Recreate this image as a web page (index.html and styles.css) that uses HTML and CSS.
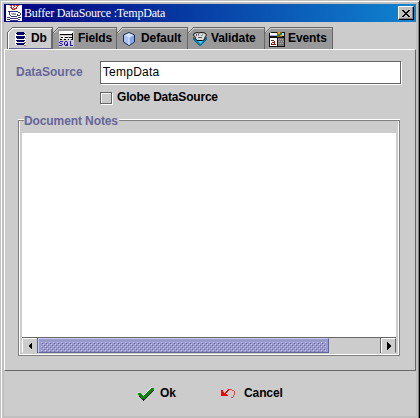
FILE: index.html
```html
<!DOCTYPE html>
<html lang="en"><head><meta charset="utf-8"><title>Buffer DataSource</title><link rel="stylesheet" href="styles.css"></head>
<body><div class="window">
<header class="titlebar">
<svg class="java" width="16" height="18" viewBox="0 0 16 18" shape-rendering="crispEdges"><path fill="#fff" d="M0 1h16v16H0z"/><path fill="none" stroke="#e02020" d="M4 1.5h2M7 1.5h2M10 1.5h3M5 2.5h1M8 2.5h1M11 2.5h1M4 3.5h2M7 3.5h1M10 3.5h1M5 4.5h2M8 4.5h3M6 5.5h3"/><path fill="none" stroke="#34347c" d="M2 7.5h10M12 8.5h2M14.5 9v2M12 11.5h2M3.5 8v3M4.5 11v1M5 12.5h6M11.5 10v2M1 13.5h3M4 14.5h8M12 13.5h3M1 15.5h3M4 16.5h8M12 15.5h2"/><path stroke="#9999b8" d="M5 9.5h5M6 10.5h4"/></svg>
<h1>Buffer DataSource :TempData</h1>
<button class="close" aria-label="Close"><svg width="8" height="7" viewBox="0 0 8 7" shape-rendering="crispEdges"><path stroke="#000" d="M0 .5h2M6 .5h2M1 1.5h2M5 1.5h2M2 2.5h4M3 3.5h2M2 4.5h4M1 5.5h2M5 5.5h2M0 6.5h2M6 6.5h2"/></svg></button>
</header>
<main class="content">
<nav class="tabs">
<div class="tab db active"><svg width="16" height="16" viewBox="0 0 16 16" shape-rendering="crispEdges"><path fill="#fff" d="M2 2h11v12H2z"/><path fill="#000066" d="M4 1h7v1H4zM3 2h9v1H3zM4 3h7v1H4zM3 5h9v2H3zM4 7h7v1H4zM3 9h9v1H3zM4 10h7v1H4zM3 12h9v1H3zM4 13h7v1H4z"/><path stroke="#777" d="M12 3.5h1M12 7.5h1M11 11.5h2M11 14.5h2"/></svg><span>Db</span></div>
<div class="tab fields"><svg width="15" height="16" viewBox="0 0 15 16" shape-rendering="crispEdges"><path fill="#ccc" d="M0 0h15v16H0z"/><path fill="#fff" d="M0 0h14v3H0zM2 5h3v3H2zM6 5h3v3H6zM10 5h3v3h-3z"/><path stroke="#000" d="M1 3.5h13M2 6.5h2M6 6.5h3M10 6.5h3M1 8.5h2M5 8.5h2M9 8.5h1M12 8.5h2M13.5 2v7"/><path fill="none" stroke="#2411d8" d="M4 10.5H1M.5 11v1M1 12.5h2M3.5 13v1M0 14.5h3M6 10.5h2M5.5 11v3M8.5 11v4M6 14.5h2M7 13.5h1M11.5 10v5M11 14.5h3"/></svg><span>Fields</span></div>
<div class="tab default"><svg width="14" height="16" viewBox="0 0 14 16"><path fill="#a9c2ff" stroke="#18284d" d="M7 1.5 12.5 4v7L7 14.5 1.5 11V4z"/><path fill="#d4e5ff" d="m2.5 4.3 4.5-2 4.5 2L7 6.5z"/><path fill="#87a6ed" d="m7 7 5-2.5v6L7 14z"/><path stroke="#e9f3ff" d="M7 6.5V14"/></svg><span>Default</span></div>
<div class="tab validate"><svg width="16" height="16" viewBox="0 0 16 16"><path fill="#0786bd" stroke="#006487" d="M1.5 6.5 4 9h8l2.5-2.5v2l-6 6-1 0-6-6z"/><path fill="#54c9ed" d="M6 10h5l-2.500 3z"/><path fill="#ddd" stroke="#111" d="m2 2.500 3-1 2 .5 2-.5 4 .5 1.500 2-1.500 2-.5 2.500-2 1H5L3.500 7.500l-.5-2-1.500-1z"/><path d="M4.500 3v2M10.500 3.500 9.500 5M6.500 3v1.500M6 6.500h4" stroke="#555" fill="none"/></svg><span>Validate</span></div>
<div class="tab events"><svg width="16" height="16" viewBox="0 0 16 16" shape-rendering="crispEdges"><path fill="#111" d="M0 1h16v15H0z"/><path fill="#fff" d="M1 2h7v2H1zM1 7h7v8H1z"/><path fill="#a9afe0" d="M1 4h7v1H1z"/><path fill="#ccc" d="M12 2h3v3h-3z"/><path fill="#777" d="M9 7h6v8H9z"/><path stroke="#aaa" stroke-dasharray="1 1" d="M9 8.5h6M10 10.5h5M9 12.5h6"/><path fill="none" stroke="#8a1717" d="M2 9.5h3M5.5 10v4M3 11.5h2M2.5 12v2M3 13.5h4"/><path fill="#7d6500" d="M8 1h5v5H8z"/><path fill="#f39a18" d="M9 1h2v2H9zM11 4h2v1h-2z"/><path fill="#158b36" d="M11 2h2v2h-2zM8 4h2v1H8z"/></svg><span>Events</span></div>
</nav>
<section class="panel">
<div class="row"><label for="source">DataSource</label><input id="source" value="TempData"></div>
<label class="check"><i></i><span>Globe DataSource</span></label>
<section class="notes"><h2>Document Notes</h2><div class="editor"></div>
<div class="scroll"><div class="arrow left"><svg width="4" height="8" viewBox="0 0 4 8" shape-rendering="crispEdges"><path d="M4 0v8L0 4z"/></svg></div><div class="track"><div class="thumb"><svg width="285" height="10"><defs><pattern id="bumps" width="4" height="4" patternUnits="userSpaceOnUse"><path fill="#ccf" d="M0 0h1v1H0zM2 2h1v1H2z"/><path fill="#669" d="M1 1h1v1H1zM3 3h1v1H3z"/></pattern></defs><rect width="285" height="10" fill="url(#bumps)"/></svg></div></div><div class="arrow right"><svg width="4" height="8" viewBox="0 0 4 8" shape-rendering="crispEdges"><path d="M0 0v8l4-4z"/></svg></div></div>
</section></section>
<footer><button class="ok"><svg width="18" height="15" viewBox="0 0 18 15" shape-rendering="crispEdges"><path fill="none" stroke="#fff" stroke-width="2" d="m0 7 5 4L14 2"/><path fill="none" stroke="#222" stroke-width="1.500" d="m1 10 4.500 4L16 4"/><path fill="#078707" d="M0 7h2l3 3 8-8h3v2L6 13H5L0 9z"/></svg><span>Ok</span></button><button class="cancel"><svg width="15" height="11" viewBox="0 0 15 11" shape-rendering="crispEdges"><path fill="#f00" d="M0 2h2v2h1v1l4-4h4v1H8L5 5v1h1v1h1v1H0z"/><path fill="none" stroke="#e44" d="M8 1.5h3M11 2.5h2M13.5 3v4M12.5 7v2M10 9.5h2"/></svg><span>Cancel</span></button></footer>
</main></div></body></html>
```
FILE: styles.css
```css
*{box-sizing:border-box}
html,body{margin:0;width:420px;height:418px;overflow:hidden}
body{font:bold 12px/14px "Liberation Sans",Arial,sans-serif;color:#000;background:#c0c0c0}
svg{display:block;flex:none}
button{font:inherit;color:inherit;padding:0;border:0;background:none}
.window{width:420px;height:418px;padding:3px 2px 2px 3px;border-left:1px solid #c0c0c0;border-right:1px solid #000;border-top:1px solid #c0c0c0;box-shadow:inset 1px 1px #fff,inset -1px 0 #808080}
.titlebar{display:flex;align-items:center;width:412px;height:18px;padding-left:2px;background:linear-gradient(90deg,#000080,#1084d0)}
h1{margin:0 auto 0 2px;font:12px/18px "Liberation Serif",serif;color:#fff;letter-spacing:-.19px;white-space:nowrap}
.close{display:flex;align-items:center;justify-content:center;width:16px;height:14px;margin-right:2px;background:#c0c0c0;border:1px solid;border-color:#fff #000 #000 #fff;box-shadow:inset -1px -1px #808080}
.content{width:412px;height:394px;padding-top:5px;background:#ccc}
.tabs{display:flex;height:22px;padding-left:3px}
.tab{position:relative;display:flex;align-items:center;height:22px;background:#999;border-top:1px solid #666;border-right:1px solid #666;box-shadow:inset 0 1px #ccc;white-space:nowrap}
.tab:before{content:"";position:absolute;left:0;top:-1px;width:6px;height:6px;background:linear-gradient(135deg,#ccc 42%,#666 43%,#666 54%,#fff 55%,#fff 66%,#ccc 67%)}
.tab:not(.active):before{background:linear-gradient(135deg,#ccc 42%,#666 43%,#666 54%,#ccc 55%,#ccc 66%,#999 67%)}
.tab span{letter-spacing:-.08px;margin-top:-2px}
.db{width:46px;padding-left:5px;gap:2px}
.active{background:#ccc;border-left:1px solid #666;box-shadow:inset 1px 1px #fff,inset -1px -1px #669}
.active:before{left:-1px}
.fields{width:64px;padding-left:6px;gap:4px}
.default{width:71px;padding-left:5px;gap:5px}
.validate{width:77px;padding-left:4px;gap:3px}
.events{width:68px;padding-left:4px;gap:3px}
.panel{height:322px;padding:11px 14px 0 10px;border:1px solid;border-color:#fff #666 #666 #fff}
.row{display:flex;align-items:center;height:23px}
.row label{width:85px;padding-left:1px;color:#669;margin-top:-2px}
input{width:302px;height:23px;padding:0 1px 1px 2px;border:1px solid #666;outline:0;border-radius:0;background:#fff;box-shadow:1px 1px #fff;font:12px "Liberation Sans",Arial,sans-serif;letter-spacing:.25px;color:#000}
.check{display:flex;align-items:center;width:140px;height:13px;margin:7px 0 0 85px}
.check i{width:12px;height:12px;margin-right:5px;border:1px solid #666;box-shadow:1px 1px #fff,inset 1px 1px #fff}
.check span{letter-spacing:-.2px;margin-top:-2px;white-space:nowrap}
.notes{width:382px;height:236px;margin:16px 0 0 3px;padding:0 3px;border:1px solid #808080;box-shadow:inset 1px 0 #fff,inset -1px -1px #fff,0 -1px #fff}
h2{width:95px;margin:-7px 0 0 2px;height:14px;background:#ccc;color:#669;font:inherit;letter-spacing:-.1px;white-space:nowrap}
.editor{width:374px;height:204px;margin-top:5px;background:#fff}
.scroll{display:flex;width:374px;height:16px;border-top:1px solid #666}
.arrow{display:flex;align-items:center;justify-content:center;width:15px;height:15px;border:1px solid;border-color:#fff #ccc #ccc #fff}
.arrow.right{border-right-color:#666}
.track{width:344px;height:15px;border:1px solid #666;border-top:0;border-bottom:0}
.thumb{width:291px;height:15px;padding:3px 2px;background:#99c;border:1px solid;border-color:#ccf #669 #669 #ccf}
footer{display:flex;height:45px;padding-left:134px}
.ok,.cancel{display:flex;align-items:center;height:44px}
.ok{width:83px;gap:4px}
.cancel{gap:8px}
.cancel span{letter-spacing:-.1px}
```
